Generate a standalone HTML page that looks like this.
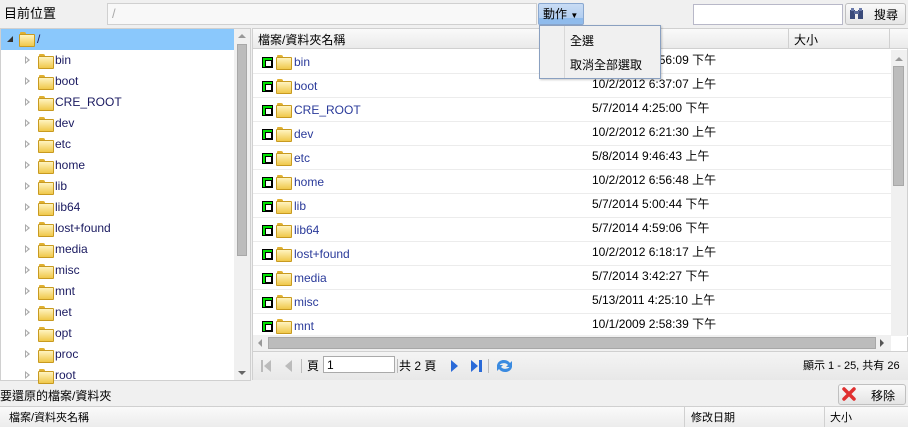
<!DOCTYPE html>
<html><head><meta charset="utf-8"><style>
*{box-sizing:border-box;margin:0;padding:0}
body{width:908px;height:427px;overflow:hidden;background:#f0f0f0;font-family:"Liberation Sans","Noto Sans CJK TC",sans-serif;font-size:12px;line-height:14px;color:#000;position:relative}
.a{position:absolute}
.fold{position:absolute;width:14px;height:13px}
.fold:before{content:"";position:absolute;left:1px;top:0;width:6px;height:4px;background:#e0b030;border-radius:1px 2px 0 0}
.fold:after{content:"";position:absolute;left:0;top:2px;width:14px;height:11px;background:linear-gradient(#fff4c0,#f0c84a);border:1px solid #c89a20;border-radius:1px}
.tri{position:absolute;width:0;height:0;border-top:4px solid transparent;border-bottom:4px solid transparent;border-left:5px solid #aaa}
.tri:after{content:"";position:absolute;left:-4px;top:-2px;border-top:2px solid transparent;border-bottom:2px solid transparent;border-left:2px solid #fff}
.tt{position:absolute;color:#1a1a60;font-size:12px}
.chk{position:absolute;width:11px;height:11px;background:#00e000;border:1px solid #000}
.chk:after{content:"";position:absolute;left:2px;top:2px;width:5px;height:5px;background:#fff;border:1px solid #000}
.gl{position:absolute;color:#2a3a9a}
.dt{position:absolute;color:#000}
</style></head><body>
<div class="a" style="left:4px;top:7px;font-size:13px">目前位置</div>
<div class="a" style="left:107px;top:3px;width:430px;height:22px;background:#f8f8f8;border:1px solid #d0d0d0;color:#aaa;padding:3px 4px;font-size:13px">/</div>
<div class="a" style="left:538px;top:3px;width:46px;height:22px;background:linear-gradient(#c8dcf4 0,#b2cef0 70%,#8fbbec 70%);border:1px solid #8aa8d0;border-radius:2px;padding:3px 4px;font-size:12px">動作 <span style="font-size:8px">▼</span></div>
<div class="a" style="left:693px;top:4px;width:150px;height:21px;background:#fff;border:1px solid #b8b8c8"></div>
<div class="a" style="left:845px;top:3px;width:61px;height:22px;background:linear-gradient(#fafafa,#e6e6e6);border:1px solid #c0c0c0;border-radius:3px;padding:4px 0 0 28px;font-size:12px">搜尋</div>
<svg class="a" style="left:849px;top:7px" width="16" height="14"><rect x="1" y="3" width="5" height="9" fill="#3a4a7a"/><rect x="9" y="3" width="5" height="9" fill="#3a4a7a"/><rect x="5" y="4" width="5" height="3" fill="#5a6a9a"/><rect x="2" y="1" width="3" height="3" fill="#6a7aaa"/><rect x="10" y="1" width="3" height="3" fill="#6a7aaa"/></svg>
<div class="a" style="left:0;top:28px;width:251px;height:353px;background:#fff;border:1px solid #d0d0d0"></div>
<div class="a" style="left:1px;top:29px;width:233px;height:21px;background:#8ac8fc"></div>
<div class="a" style="left:7px;top:36px;border-left:3px solid transparent;border-right:3px solid #333;border-top:3px solid transparent;border-bottom:3px solid #333;width:0;height:0"></div>
<div class="fold" style="left:19px;top:32px"></div><div class="tt" style="left:37px;top:32px">/</div>
<div id="tree"></div>
<div class="a" style="left:234px;top:29px;width:16px;height:351px;background:#f0f0f0"></div>
<div class="a" style="left:237px;top:44px;width:10px;height:212px;background:#bcbcbc;border:1px solid #a8a8a8"></div>
<div class="a" style="left:238px;top:34px;border-left:4px solid transparent;border-right:4px solid transparent;border-bottom:4px solid #999"></div>
<div class="a" style="left:238px;top:371px;border-left:4px solid transparent;border-right:4px solid transparent;border-top:4px solid #666"></div>
<div class="a" style="left:252px;top:28px;width:656px;height:352px;background:#fff;border:1px solid #d0d0d0"></div>
<div class="a" style="left:253px;top:29px;width:655px;height:20px;background:linear-gradient(#fafafa,#eaeaea);border-bottom:1px solid #d0d0d0"></div>
<div class="a" style="left:258px;top:33px">檔案/資料夾名稱</div>
<div class="a" style="left:788px;top:29px;height:20px;border-left:1px solid #d0d0d0"></div>
<div class="a" style="left:889px;top:29px;height:20px;border-left:1px solid #d0d0d0"></div>
<div class="a" style="left:794px;top:33px">大小</div>
<div id="rows"></div>
<div class="a" style="left:891px;top:50px;width:16px;height:286px;background:#f0f0f0"></div>
<div class="a" style="left:893px;top:66px;width:11px;height:120px;background:#bcbcbc;border:1px solid #a8a8a8"></div>
<div class="a" style="left:895px;top:57px;border-left:4px solid transparent;border-right:4px solid transparent;border-bottom:4px solid #999"></div>
<div class="a" style="left:253px;top:335px;width:638px;height:16px;background:#f0f0f0"></div>
<div class="a" style="left:268px;top:337px;width:608px;height:12px;background:#bcbcbc;border:1px solid #a8a8a8"></div>
<div class="a" style="left:258px;top:339px;border-top:4px solid transparent;border-bottom:4px solid transparent;border-right:4px solid #999"></div>
<div class="a" style="left:880px;top:339px;border-top:4px solid transparent;border-bottom:4px solid transparent;border-left:4px solid #555"></div>
<div class="a" style="left:253px;top:351px;width:655px;height:29px;background:linear-gradient(#f4f4f4,#e8e8e8);border-top:1px solid #d0d0d0"></div>
<svg class="a" style="left:260px;top:358px" width="260" height="16">
<rect x="1" y="2" width="2" height="12" fill="#bbb"/><path d="M11 2 L4 8 L11 14Z" fill="#bbb"/>
<path d="M32 2 L25 8 L32 14Z" fill="#bbb"/>
<rect x="41" y="1" width="1" height="14" fill="#bbb"/>
<rect x="137" y="1" width="1" height="14" fill="#bbb"/>
<path d="M191 2 L198 8 L191 14Z" fill="#2a6ad8"/>
<path d="M211 2 L218 8 L211 14Z" fill="#2a6ad8"/><rect x="219" y="2" width="3" height="12" fill="#2a6ad8"/>
<rect x="228" y="1" width="1" height="14" fill="#bbb"/>
<path d="M237 7 A7 6 0 0 1 250 5 L252 3 L252 9 L246 9 L248 7 A5 4 0 0 0 239 8Z" fill="#3a8ae0"/>
<path d="M252 9 A7 6 0 0 1 239 11 L237 13 L237 7 L243 7 L241 9 A5 4 0 0 0 250 8Z" fill="#3a8ae0"/>
</svg>
<div class="a" style="left:307px;top:359px">頁</div>
<div class="a" style="left:323px;top:356px;width:72px;height:17px;background:#fff;border:1px solid #aaa;padding:1px 3px">1</div>
<div class="a" style="left:399px;top:359px">共 2 頁</div>
<div class="a" style="left:803px;top:359px;font-size:11px">顯示 1 - 25, 共有 26</div>
<div class="a" style="left:539px;top:25px;width:122px;height:54px;background:#f0f0f0;border:1px solid #8aa0c0;box-shadow:1px 1px 2px rgba(0,0,0,.2)"></div>
<div class="a" style="left:564px;top:26px;height:52px;border-left:1px solid #d8d8d8"></div>
<div class="a" style="left:570px;top:34px">全選</div>
<div class="a" style="left:570px;top:58px">取消全部選取</div>
<div class="a" style="left:0;top:389px;font-size:12px">要還原的檔案/資料夾</div>
<div class="a" style="left:838px;top:384px;width:68px;height:21px;background:linear-gradient(#fafafa,#e4e4e4);border:1px solid #c0c0c0;border-radius:3px;padding:4px 0 0 32px">移除</div>
<svg class="a" style="left:842px;top:387px" width="14" height="14"><path d="M2 2 L12 12 M12 2 L2 12" stroke="#e03030" stroke-width="3.5" stroke-linecap="round"/></svg>
<div class="a" style="left:0;top:406px;width:908px;height:21px;background:linear-gradient(#fafafa,#ececec);border-top:1px solid #d0d0d0"></div>
<div class="a" style="left:684px;top:406px;height:21px;border-left:1px solid #d0d0d0"></div>
<div class="a" style="left:824px;top:406px;height:21px;border-left:1px solid #d0d0d0"></div>
<div class="a" style="left:9px;top:411px;font-size:11px">檔案/資料夾名稱</div>
<div class="a" style="left:691px;top:411px;font-size:11px">修改日期</div>
<div class="a" style="left:830px;top:411px;font-size:11px">大小</div>
<script>
var t=["bin","boot","CRE_ROOT","dev","etc","home","lib","lib64","lost+found","media","misc","mnt","net","opt","proc","root"],h="";
t.forEach(function(n,i){var y=53+i*21;h+='<div class="tri" style="left:25px;top:'+(y+3)+'px"></div><div class="fold" style="left:38px;top:'+(y+1)+'px"></div><div class="tt" style="left:55px;top:'+y+'px">'+n+'</div>';});
document.getElementById("tree").outerHTML=h;
var d=["10/2/2012 6:56:09 下午","10/2/2012 6:37:07 上午","5/7/2014 4:25:00 下午","10/2/2012 6:21:30 上午","5/8/2014 9:46:43 上午","10/2/2012 6:56:48 上午","5/7/2014 5:00:44 下午","5/7/2014 4:59:06 下午","10/2/2012 6:18:17 上午","5/7/2014 3:42:27 下午","5/13/2011 4:25:10 上午","10/1/2009 2:58:39 下午"],g="";
t.slice(0,12).forEach(function(n,i){var y=50+i*24;g+='<div class="a" style="left:253px;top:'+(y+23)+'px;width:638px;border-top:1px solid #ececec"></div><div class="chk" style="left:262px;top:'+(y+7)+'px"></div><div class="fold" style="left:276px;top:'+(y+5)+'px"></div><div class="gl" style="left:294px;top:'+(y+5)+'px">'+n+'</div><div class="dt" style="left:592px;top:'+(y+3)+'px">'+d[i]+'</div>';});
g+='<div class="a" style="left:253px;top:335px;width:655px;height:2px;background:#fff"></div>';
document.getElementById("rows").outerHTML=g;
</script>
</body></html>
